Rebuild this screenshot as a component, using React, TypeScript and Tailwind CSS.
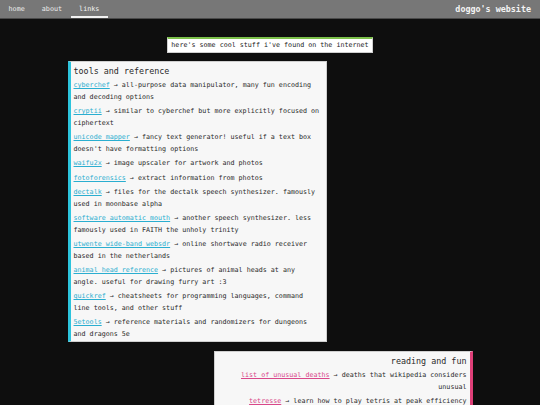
import React from 'react';

const mono = { fontFamily: '"DejaVu Sans Mono", "Liberation Mono", monospace' };

type Item = { name: string; desc: string };

const tools: Item[] = [
  { name: 'cyberchef', desc: 'all-purpose data manipulator, many fun encoding and decoding options' },
  { name: 'cryptii', desc: 'similar to cyberchef but more explicitly focused on ciphertext' },
  { name: 'unicode mapper', desc: "fancy text generator! useful if a text box doesn't have formatting options" },
  { name: 'waifu2x', desc: 'image upscaler for artwork and photos' },
  { name: 'fotoforensics', desc: 'extract information from photos' },
  { name: 'dectalk', desc: 'files for the dectalk speech synthesizer. famously used in moonbase alpha' },
  { name: 'software automatic mouth', desc: 'another speech synthesizer. less famously used in FAITH the unholy trinity' },
  { name: 'utwente wide-band websdr', desc: 'online shortwave radio receiver based in the netherlands' },
  { name: 'animal head reference', desc: 'pictures of animal heads at any angle. useful for drawing furry art :3' },
  { name: 'quickref', desc: 'cheatsheets for programming languages, command line tools, and other stuff' },
  { name: '5etools', desc: 'reference materials and randomizers for dungeons and dragons 5e' },
];

const reading: Item[] = [
  { name: 'list of unusual deaths', desc: 'deaths that wikipedia considers unusual' },
  { name: 'tetresse', desc: 'learn how to play tetris at peak efficiency' },
];

export default function App() {
  return (
    <div className="min-h-[405px] w-[540px] overflow-hidden bg-[#0e0e0e]" style={mono}>
      {/* nav */}
      <div className="flex h-[19px] items-stretch border-b border-[#4a4a4a] bg-[#777777] text-[6.75px]">
        <a className="flex items-center px-[8.5px] text-[#ececec]">home</a>
        <a className="flex items-center px-[8.5px] text-[#ececec]">about</a>
        <a className="flex items-center border-b-[2px] border-[#f2f2f2] px-[8.5px] pt-[2px] text-[#f4f4f4]">links</a>
        <span className="ml-auto flex items-center pr-[9px] text-[8.4px] font-bold text-[#f4f4f4]">doggo's website</span>
      </div>

      <div className="mx-auto flex w-[405px] flex-col pt-[18px]">
        {/* banner */}
        <div className="mx-auto w-fit whitespace-nowrap border border-t-[2px] border-[#cfcfcf] border-t-[#7cc04a] bg-white px-[3px] py-[2px] text-[6.7px] leading-[9px] text-[#222]">
          here's some cool stuff i've found on the internet
        </div>

        {/* tools */}
        <div className="mt-[8px] w-[259px] border border-l-[3px] border-[#cfcfcf] border-l-[#2cc3dc] bg-[#f7f7f7] pl-[3px] pr-[4px] pt-[2px] pb-[1px] text-[#2a2a2a]">
          <div className="mb-[2px] text-[8.4px] leading-[14px]">tools and reference</div>
          {tools.map((t) => (
            <p key={t.name} className="mb-[3px] text-[6.7px] leading-[11.5px] last:mb-0">
              <a className="text-[#2aaed0] underline">{t.name}</a> → {t.desc}
            </p>
          ))}
        </div>

        {/* reading */}
        <div className="mt-[9px] ml-auto w-[259px] border border-r-[3px] border-[#cfcfcf] border-r-[#df3f78] bg-[#f7f7f7] pl-[4px] pr-[3px] pt-[2px] pb-[1px] text-right text-[#2a2a2a]">
          <div className="mb-[2px] text-[8.4px] leading-[14px]">reading and fun</div>
          {reading.map((t) => (
            <p key={t.name} className="mb-[3px] text-[6.7px] leading-[11.5px] last:mb-0">
              <a className="text-[#d9488a] underline">{t.name}</a> → {t.desc}
            </p>
          ))}
        </div>
      </div>
    </div>
  );
}
